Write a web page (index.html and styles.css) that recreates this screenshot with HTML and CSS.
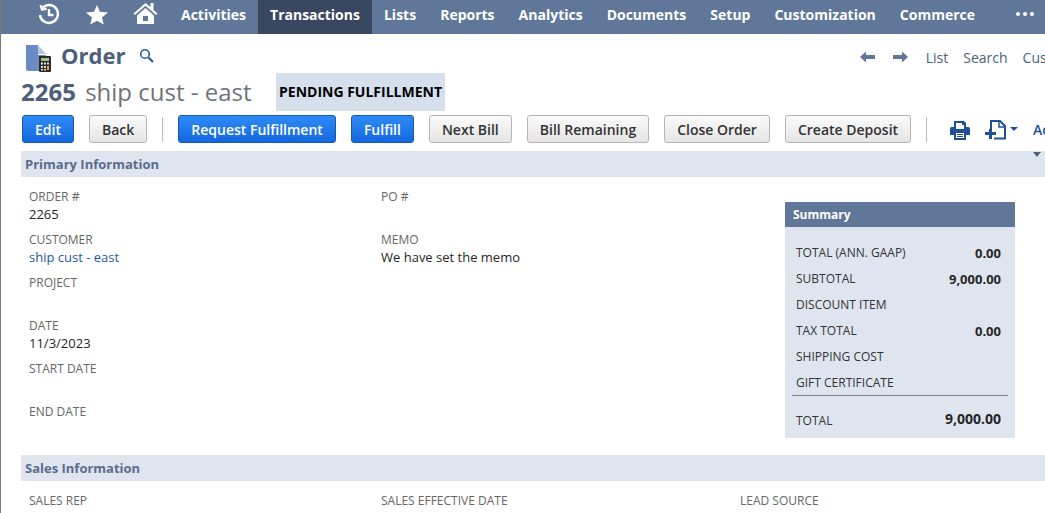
FILE: index.html
```html
<!DOCTYPE html>
<html lang="en">
<head>
    <meta charset="UTF-8">
    <meta name="viewport" content="width=device-width, initial-scale=1.0">
    <title>Order</title>
    <link rel="stylesheet" href="styles.css">
</head>
<body>
<div class="nav">
    <div class="nav-icons">
        <svg class="nav-clock" width="24" height="24" viewBox="0 0 24 24" fill="none" stroke="#fff" stroke-width="2.4">
            <path d="M5.6 5.6A9 9 0 1 1 3 13"/>
            <path d="M3.5 3.2L5 7.6L9.6 6.6" stroke-width="2.2"/>
            <path d="M12 7V13H16.5"/>
        </svg>
        <svg class="nav-star" width="24" height="24" viewBox="0 0 24 24" fill="#fff">
            <path d="M12 2L15 8.800L23 9.500L17 14.500L18.800 21.500L12 17.800L5.200 21.500L7 14.500L1 9.500L9 8.800z"/>
        </svg>
        <svg class="nav-home" width="25" height="24" viewBox="0 0 25 24" fill="#fff">
            <path d="M12.5 3L.5 13.5l1.4 1.5L12.5 5.8 23.1 15l1.4-1.5-4-3.500V3h-3v4.300z"/>
            <path d="M4 15.5L12.5 8l8.500 7.500V24H4zM10 16v5h5v-5z" fill-rule="evenodd"/>
        </svg>
    </div>
    <a class="nav-item">Activities</a>
    <a class="nav-item active">Transactions</a>
    <a class="nav-item">Lists</a>
    <a class="nav-item">Reports</a>
    <a class="nav-item">Analytics</a>
    <a class="nav-item">Documents</a>
    <a class="nav-item">Setup</a>
    <a class="nav-item">Customization</a>
    <a class="nav-item">Commerce</a>
    <div class="nav-more"><span></span><span></span><span></span></div>
</div>

<div class="title-row">
    <svg class="doc-icon" width="26" height="28" viewBox="0 0 26 28">
        <path d="M0 1H12V11H20V27H2a2 2 0 0 1-2-2z" fill="#6a8bc4"/>
        <path d="M12 1L20 10H12z" fill="#b4c5e0"/>
        <rect x="13" y="12" width="12" height="16" rx="1" fill="#2b2b2b"/>
        <rect x="15" y="14" width="8" height="3" fill="#9dc48a"/>
        <rect x="15" y="18.5" width="2" height="2" fill="#ddd"/>
        <rect x="18" y="18.5" width="2" height="2" fill="#ddd"/>
        <rect x="21" y="18.5" width="2" height="2" fill="#ddd"/>
        <rect x="15" y="22" width="2" height="2" fill="#ddd"/>
        <rect x="18" y="22" width="2" height="2" fill="#ddd"/>
        <rect x="21" y="22" width="2" height="4" fill="#e8a33d"/>
        <rect x="15" y="25" width="2" height="1.5" fill="#ddd"/>
        <rect x="18" y="25" width="2" height="1.5" fill="#ddd"/>
    </svg>
    <h1 class="page-title">Order</h1>
    <svg class="search-icon" width="15" height="15" viewBox="0 0 15 15" fill="none" stroke="#255a9f">
        <circle cx="6" cy="6" r="4.3" stroke-width="1.6"/>
        <path d="M9.5 9.5L14 14" stroke-width="2.2"/>
    </svg>
    <div class="title-links">
        <svg class="arrow" width="15" height="12" viewBox="0 0 15 12" fill="#607799"><path d="M0 6L6 .5V4h9v4H6v3.5z"/></svg>
        <svg class="arrow" width="15" height="12" viewBox="0 0 15 12" fill="#607799"><path d="M15 6L9 .5V4H0v4h9v3.5z"/></svg>
        <a class="title-link">List</a>
        <a class="title-link">Search</a>
        <a class="title-link">Customize</a>
    </div>
</div>

<div class="record-row">
    <div class="record-name"><b>2265</b> <span>ship cust - east</span></div>
    <div class="status">PENDING FULFILLMENT</div>
</div>

<div class="toolbar">
    <button class="btn btn-blue">Edit</button>
    <button class="btn">Back</button>
    <div class="sep"></div>
    <button class="btn btn-blue">Request Fulfillment</button>
    <button class="btn btn-blue">Fulfill</button>
    <button class="btn">Next Bill</button>
    <button class="btn">Bill Remaining</button>
    <button class="btn">Close Order</button>
    <button class="btn">Create Deposit</button>
    <div class="sep"></div>
    <svg class="print-icon" width="20" height="19" viewBox="0 0 20 19" fill="#1f5197">
        <path fill-rule="evenodd" d="M4 0H14L16 2V6H18.5A1.5 1.5 0 0 1 20 7.5V14H16V19H4V14H0V7.5A1.5 1.5 0 0 1 1.5 6H4zM6 2V8H14V4H12V2zM6 12V17H14V12z"/>
        <rect x="7" y="13" width="6" height="1"/>
        <rect x="7" y="15" width="6" height="1"/>
    </svg>
    <svg class="new-icon" width="33" height="20" viewBox="0 0 33 20">
        <path d="M6 9V1H15L20 6V18.500H9" fill="none" stroke="#1f5197" stroke-width="2"/>
        <path d="M14 1V7H20" fill="none" stroke="#1f5197" stroke-width="1.5"/>
        <path d="M4 9H7V12H11V15H7V19H4V15H0V12H4z" fill="#1f5197"/>
        <path d="M25 7H33L29 11z" fill="#1f5197"/>
    </svg>
    <a class="actions">Actions</a>
</div>

<div class="section-bar">
    Primary Information
    <i class="bar-caret"></i>
</div>

<div class="primary">
    <div class="col col-one">
        <div class="field"><label>Order #</label><p>2265</p></div>
        <div class="field"><label>Customer</label><p><a>ship cust - east</a></p></div>
        <div class="field"><label>Project</label><p></p></div>
        <div class="field"><label>Date</label><p>11/3/2023</p></div>
        <div class="field"><label>Start Date</label><p></p></div>
        <div class="field"><label>End Date</label><p></p></div>
    </div>
    <div class="col col-two">
        <div class="field"><label>PO #</label><p></p></div>
        <div class="field"><label>Memo</label><p>We have set the memo</p></div>
    </div>
    <div class="summary">
        <div class="summary-head">Summary</div>
        <div class="summary-body">
            <div class="sum-row"><span>TOTAL (ANN. GAAP)</span><b>0.00</b></div>
            <div class="sum-row"><span>SUBTOTAL</span><b>9,000.00</b></div>
            <div class="sum-row"><span>DISCOUNT ITEM</span></div>
            <div class="sum-row"><span>TAX TOTAL</span><b>0.00</b></div>
            <div class="sum-row"><span>SHIPPING COST</span></div>
            <div class="sum-row"><span>GIFT CERTIFICATE</span></div>
            <div class="sum-total"><span>TOTAL</span><b>9,000.00</b></div>
        </div>
    </div>
</div>

<div class="section-bar">Sales Information</div>

<div class="sales">
    <div class="field"><label>Sales Rep</label></div>
    <div class="field"><label>Sales Effective Date</label></div>
    <div class="field"><label>Lead Source</label></div>
</div>
</body>
</html>
```

FILE: styles.css
```css
html, body {
    height: 513px;
    overflow: hidden;
}
body {
    font-family: "Open Sans", Arial, sans-serif;
    background-color: #fff;
    color: #262626;
    margin: 0;
    padding: 0;
    border-left: 1px solid #7b7b7b;
    box-sizing: border-box;
}
.nav {
    display: flex;
    height: 34px;
    background-color: #607799;
    margin-left: -1px;
    color: #fff;
    font-size: 14px;
    font-weight: 700;
}
.nav-icons {
    display: flex;
    align-items: flex-start;
    width: 169px;
    padding: 2px 0 0 37px;
    box-sizing: border-box;
}
.nav-clock { margin-right: 24px; }
.nav-star { margin: 1px 24px 0 0; }
.nav-home { margin-top: -2px; }
.nav-item {
    padding: 0 12px;
    line-height: 30px;
    white-space: nowrap;
}
.nav-item.active {
    background-color: #3a4761;
}
.nav-more {
    display: flex;
    gap: 3px;
    margin-left: auto;
    margin-right: 11px;
    padding-top: 12px;
}
.nav-more span {
    width: 4px;
    height: 4px;
    border-radius: 50%;
    background: #fff;
}
.title-row {
    display: flex;
    align-items: center;
    height: 39px;
    padding-left: 25px;
}
.doc-icon { margin-top: 9px; }
.page-title {
    margin: 2px 0 0 9px;
    font-size: 22px;
    line-height: 30px;
    font-weight: 700;
    color: #4d5f7c;
}
.search-icon {
    margin: 3px 0 0 14px;
}
.title-links {
    display: flex;
    align-items: center;
    gap: 15px;
    margin-left: auto;
    margin-right: -46px;
    padding-top: 7px;
    font-size: 14px;
    color: #4d5f7c;
}
.arrow {
    margin-right: 3px;
}
.title-link {
    white-space: nowrap;
}
.record-row {
    display: flex;
    align-items: stretch;
    height: 38px;
    padding-left: 20px;
}
.record-name {
    width: 255px;
    font-size: 24px;
    line-height: 38px;
    color: #6f7378;
    white-space: nowrap;
}
.record-name b {
    color: #4d5f7c;
    margin-right: 3px;
}
.status {
    background-color: #d5e0ec;
    color: #000;
    font-size: 14px;
    font-weight: 700;
    line-height: 38px;
    padding: 0 3px;
    width: 163px;
    white-space: nowrap;
}
.toolbar {
    display: flex;
    align-items: center;
    height: 28px;
    margin-top: 4px;
    padding-left: 21px;
}
.toolbar > * {
    flex: none;
}
.btn {
    height: 28px;
    padding: 0 12px;
    margin-right: 15px;
    border: 1px solid #b5b5b5;
    border-radius: 3px;
    background: linear-gradient(#fafafa, #e5e5e5);
    color: #333;
    font-family: inherit;
    font-size: 14px;
    font-weight: 600;
    white-space: nowrap;
}
.btn-blue {
    border-color: #125ab2;
    background: linear-gradient(#2e8bf5, #1467e0);
    color: #fff;
}
.sep {
    width: 1px;
    height: 25px;
    background-color: #bdbdbd;
    margin-right: 15px;
}
.print-icon {
    margin: 2px 0 0 8px;
}
.new-icon {
    margin: 2px 0 0 15px;
}
.actions {
    margin-left: 15px;
    font-size: 14px;
    font-weight: 600;
    color: #1f5197;
    white-space: nowrap;
}
.section-bar {
    position: relative;
    height: 26px;
    margin-left: 20px;
    padding-left: 4px;
    background-color: #dfe5ef;
    color: #5a6c8c;
    font-size: 13px;
    font-weight: 700;
    line-height: 26px;
}
.toolbar + .section-bar {
    margin-top: 8px;
}
.bar-caret {
    position: absolute;
    right: 4px;
    top: 1px;
    border: 4px solid transparent;
    border-top: 5px solid #4d5f7c;
    border-bottom: 0;
}
.primary {
    display: flex;
    height: 278px;
    padding-left: 28px;
}
.col {
    padding-top: 11px;
}
.col-one { width: 352px; }
.col-two { width: 404px; }
.field {
    height: 43px;
}
.field label {
    display: block;
    font-size: 12px;
    line-height: 18px;
    color: #666;
    text-transform: uppercase;
}
.field p {
    margin: -1px 0 0;
    font-size: 13px;
    line-height: 18px;
    color: #262626;
}
.field a {
    color: #255a9f;
}
.summary {
    width: 230px;
    height: 236px;
    margin-top: 25px;
    background-color: #dfe5ef;
}
.summary-head {
    height: 25px;
    background-color: #607799;
    color: #fff;
    font-size: 12px;
    font-weight: 700;
    line-height: 25px;
    padding-left: 8px;
}
.summary-body {
    padding: 12px 7px 0;
}
.sum-row, .sum-total {
    display: flex;
    justify-content: space-between;
    align-items: center;
    height: 26px;
    padding: 0 7px 0 4px;
    font-size: 12px;
    color: #333;
}
.sum-row b {
    font-size: 13px;
    color: #262626;
    margin-top: 2px;
}
.sum-total {
    padding-top: 12px;
    height: 38px;
    border-top: 1px solid #808080;
    box-sizing: border-box;
}
.sum-total b {
    font-size: 14px;
    color: #262626;
    margin-top: -5px;
}
.sales {
    display: grid;
    grid-template-columns: 352px 359px 1fr;
    padding: 11px 0 0 28px;
}
```
